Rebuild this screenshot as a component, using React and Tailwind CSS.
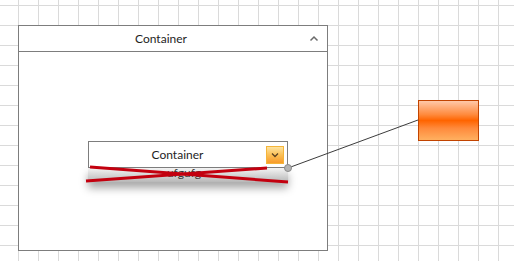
import React from 'react';

const font = { fontFamily: 'Lato, "Open Sans", "Noto Sans", sans-serif' };

export default function App() {
  return (
    <div
      className="relative w-[514px] h-[261px] overflow-hidden bg-white bg-[linear-gradient(to_right,#dadada_1px,transparent_1px),linear-gradient(to_bottom,#dadada_1px,transparent_1px)] bg-[size:20px_20px] bg-[position:18px_5px]"
      style={font}
    >
      {/* outer container */}
      <div className="absolute left-[18px] top-[25px] w-[310px] h-[226px] border border-[#7d7d7d] bg-white flex flex-col">
        <div className="h-[26px] border-b border-[#7d7d7d] flex items-center px-[8px]">
          <span className="flex-1 text-center text-[12px] text-[#1e1e1e] leading-none pt-[1px]">Container</span>
          <svg width="10" height="8" viewBox="0 0 10 8" className="ml-[14px]">
            <path d="M1.5 5.5 L5 2 L8.5 5.5" fill="none" stroke="#6b6b6b" strokeWidth="1.5" />
          </svg>
        </div>
      </div>

      {/* connector */}
      <svg className="absolute left-0 top-0" width="514" height="261">
        <line x1="288" y1="168" x2="418" y2="120" stroke="#3c3c3c" strokeWidth="1" />
      </svg>

      {/* drag preview shadow */}
      <div className="absolute left-[88px] top-[168px] w-[200px] h-[14px] bg-[linear-gradient(to_bottom,#f4f4f4,#b8b8b8)] shadow-[0_6px_8px_rgba(0,0,0,0.35)]" />
      <div className="absolute left-[88px] top-[165px] w-[200px] text-center pr-[8px] text-[12px] text-[#3a3a3a] leading-[16px]">ufgufg</div>

      {/* inner container header */}
      <div className="absolute left-[88px] top-[141px] w-[200px] h-[27px] border border-[#7d7d7d] bg-white flex items-center pr-[3px]">
        <span className="flex-1 text-center text-[12px] text-[#1e1e1e] leading-none pt-[1px]">Container</span>
        <div className="w-[18px] h-[18px] border border-[#f5b53a] bg-[linear-gradient(to_bottom,#fde3a0,#fbbf55_50%,#f79a2a)] flex items-center justify-center">
          <svg width="10" height="8" viewBox="0 0 10 8">
            <path d="M2 2.5 L5 5.5 L8 2.5" fill="none" stroke="#5a4020" strokeWidth="1.3" />
          </svg>
        </div>
      </div>

      {/* red cross */}
      <svg className="absolute left-0 top-0" width="514" height="261">
        <line x1="90" y1="167" x2="288" y2="182" stroke="#c3000f" strokeWidth="3" />
        <line x1="86" y1="181" x2="267" y2="168" stroke="#c3000f" strokeWidth="3" />
        <circle cx="288" cy="168" r="3.5" fill="#b4b4b4" stroke="#8a8a8a" strokeWidth="1" />
      </svg>

      {/* orange node */}
      <div className="absolute left-[418px] top-[100px] w-[61px] h-[41px] border border-[#c24400] bg-[linear-gradient(to_bottom,#ffc8a8,#ff8a3c_35%,#ff6400_50%,#ff8a3c_70%,#ffb060)]" />
    </div>
  );
}
